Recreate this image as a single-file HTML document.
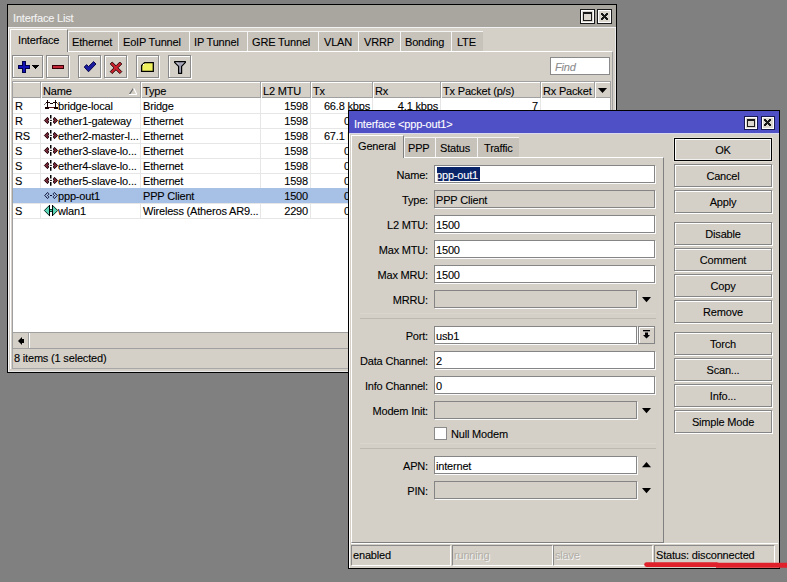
<!DOCTYPE html>
<html><head><meta charset="utf-8"><style>
html,body{margin:0;padding:0}
body{width:787px;height:582px;background:#808080;position:relative;overflow:hidden;font-family:"Liberation Sans",sans-serif}
body>div,body>span,body>svg{position:absolute;display:block}
.t{font:11px/12px "Liberation Sans",sans-serif;letter-spacing:-0.18px;white-space:nowrap;color:#000;-webkit-text-stroke:0.1px currentColor}
</style></head><body>
<div style="left:7px;top:4px;width:610px;height:369px;background:#d4d0c8;border:1px solid #000;box-sizing:border-box;box-shadow:inset 1px 1px 0 #f4f4f4, inset -1px -1px 0 #e8e8e8"></div>
<div style="left:8px;top:5px;width:608px;height:22px;background:#a9a69f"></div>
<div style="left:8px;top:27px;width:608px;height:1px;background:#f2f2f2"></div>
<span class="t" style="left:13px;top:11.7px;color:#f4f4f4">Interface List</span>
<div style="left:580px;top:9px;width:15px;height:15px;background:#dcd8d0;border:1px solid #1a1a1a;box-sizing:border-box;box-shadow:inset 1px 1px 0 #fff, inset -1px -1px 0 #fff"></div>
<div style="left:583px;top:12px;width:9px;height:9px;border:1px solid #1a1a1a;border-top-width:2px;box-sizing:border-box"></div>
<div style="left:597px;top:9px;width:15px;height:15px;background:#dcd8d0;border:1px solid #1a1a1a;box-sizing:border-box;box-shadow:inset 1px 1px 0 #fff, inset -1px -1px 0 #fff"></div>
<svg style="left:601px;top:13px" width="7" height="7" shape-rendering="crispEdges" fill="#1a1a1a"><rect x="0" y="0" width="1" height="1"/><rect x="1" y="0" width="1" height="1"/><rect x="5" y="0" width="1" height="1"/><rect x="6" y="0" width="1" height="1"/><rect x="0" y="1" width="1" height="1"/><rect x="1" y="1" width="1" height="1"/><rect x="2" y="1" width="1" height="1"/><rect x="4" y="1" width="1" height="1"/><rect x="5" y="1" width="1" height="1"/><rect x="6" y="1" width="1" height="1"/><rect x="1" y="2" width="1" height="1"/><rect x="2" y="2" width="1" height="1"/><rect x="3" y="2" width="1" height="1"/><rect x="4" y="2" width="1" height="1"/><rect x="5" y="2" width="1" height="1"/><rect x="2" y="3" width="1" height="1"/><rect x="3" y="3" width="1" height="1"/><rect x="4" y="3" width="1" height="1"/><rect x="1" y="4" width="1" height="1"/><rect x="2" y="4" width="1" height="1"/><rect x="3" y="4" width="1" height="1"/><rect x="4" y="4" width="1" height="1"/><rect x="5" y="4" width="1" height="1"/><rect x="0" y="5" width="1" height="1"/><rect x="1" y="5" width="1" height="1"/><rect x="2" y="5" width="1" height="1"/><rect x="4" y="5" width="1" height="1"/><rect x="5" y="5" width="1" height="1"/><rect x="6" y="5" width="1" height="1"/><rect x="0" y="6" width="1" height="1"/><rect x="1" y="6" width="1" height="1"/><rect x="5" y="6" width="1" height="1"/><rect x="6" y="6" width="1" height="1"/></svg>
<div style="left:10px;top:51px;width:603px;height:318px;border-top:1px solid #fff;border-left:1px solid #fff;border-right:1px solid #a0a0a0;box-sizing:border-box"></div>
<div style="left:10px;top:29px;width:58px;height:23px;background:#d4d0c8;border-left:1px solid #fff;border-top:1px solid #fff;border-right:1px solid #808080;box-sizing:border-box"></div>
<span class="t" style="left:18px;top:33.8px;">Interface</span>
<div style="left:68px;top:31px;width:50px;height:20px;background:#c7c3bb;border-left:1px solid #f4f4f4;border-top:1px solid #f4f4f4;box-sizing:border-box"></div>
<span class="t" style="left:72px;top:35.5px;">Ethernet</span>
<div style="left:118px;top:31px;width:71px;height:20px;background:#c7c3bb;border-left:1px solid #f4f4f4;border-top:1px solid #f4f4f4;box-sizing:border-box"></div>
<span class="t" style="left:123px;top:35.5px;">EoIP Tunnel</span>
<div style="left:189px;top:31px;width:58px;height:20px;background:#c7c3bb;border-left:1px solid #f4f4f4;border-top:1px solid #f4f4f4;box-sizing:border-box"></div>
<span class="t" style="left:194px;top:35.5px;">IP Tunnel</span>
<div style="left:247px;top:31px;width:71px;height:20px;background:#c7c3bb;border-left:1px solid #f4f4f4;border-top:1px solid #f4f4f4;box-sizing:border-box"></div>
<span class="t" style="left:252px;top:35.5px;">GRE Tunnel</span>
<div style="left:318px;top:31px;width:40px;height:20px;background:#c7c3bb;border-left:1px solid #f4f4f4;border-top:1px solid #f4f4f4;box-sizing:border-box"></div>
<span class="t" style="left:324px;top:35.5px;">VLAN</span>
<div style="left:358px;top:31px;width:42px;height:20px;background:#c7c3bb;border-left:1px solid #f4f4f4;border-top:1px solid #f4f4f4;box-sizing:border-box"></div>
<span class="t" style="left:364px;top:35.5px;">VRRP</span>
<div style="left:400px;top:31px;width:51px;height:20px;background:#c7c3bb;border-left:1px solid #f4f4f4;border-top:1px solid #f4f4f4;box-sizing:border-box"></div>
<span class="t" style="left:405px;top:35.5px;">Bonding</span>
<div style="left:451px;top:31px;width:32px;height:20px;background:#c7c3bb;border-left:1px solid #f4f4f4;border-top:1px solid #f4f4f4;box-sizing:border-box"></div>
<span class="t" style="left:457px;top:35.5px;">LTE</span>
<div style="left:12px;top:55px;width:31px;height:23px;border:1px solid #8a8a8a;box-sizing:border-box;box-shadow:inset 1px 1px 0 #fff, 1px 1px 0 #fff"></div>
<div style="left:46px;top:55px;width:23px;height:23px;border:1px solid #8a8a8a;box-sizing:border-box;box-shadow:inset 1px 1px 0 #fff, 1px 1px 0 #fff"></div>
<div style="left:78px;top:55px;width:23px;height:23px;border:1px solid #8a8a8a;box-sizing:border-box;box-shadow:inset 1px 1px 0 #fff, 1px 1px 0 #fff"></div>
<div style="left:104px;top:55px;width:23px;height:23px;border:1px solid #8a8a8a;box-sizing:border-box;box-shadow:inset 1px 1px 0 #fff, 1px 1px 0 #fff"></div>
<div style="left:136px;top:55px;width:23px;height:23px;border:1px solid #8a8a8a;box-sizing:border-box;box-shadow:inset 1px 1px 0 #fff, 1px 1px 0 #fff"></div>
<div style="left:168px;top:55px;width:23px;height:23px;border:1px solid #8a8a8a;box-sizing:border-box;box-shadow:inset 1px 1px 0 #fff, 1px 1px 0 #fff"></div>
<svg style="left:0px;top:0px" width="200" height="80" viewBox="0 0 200 80" shape-rendering="crispEdges"><path d="M22 61h4v4h4v4h-4v4h-4v-4h-4v-4h4z" fill="#00004a"/><path d="M23 62h2v4h4v2h-4v4h-2v-4h-4v-2h4z" fill="#1212b4"/><path d="M32 65h7v1h-1v1h-1v1h-1v1h-1v-1h-1v-1h-1v-1h-1z" fill="#000"/><rect x="52" y="65" width="12" height="4" fill="#3a0008"/><rect x="53" y="66" width="10" height="2" fill="#c02838"/></svg>
<svg style="left:80px;top:58px" width="20" height="18" viewBox="0 0 20 18"><path d="M4.2 9L6.6 6.6L8.5 8.6L13.6 3.6L16 6L8.5 13.8Z" fill="#1a1aa0" stroke="#000040" stroke-width="0.9" stroke-linejoin="round"/></svg>
<svg style="left:106px;top:58px" width="20" height="18" viewBox="0 0 20 18"><path d="M4.2 6L6.2 4L10 7.8L13.8 4L15.8 6L12 9.8L15.8 13.6L13.8 15.6L10 11.8L6.2 15.6L4.2 13.6L8 9.8Z" fill="#c8202c" stroke="#200000" stroke-width="0.9" stroke-linejoin="round"/></svg>
<svg style="left:136px;top:56px" width="24" height="22" viewBox="0 0 24 22"><path d="M8.6 6.6H17.3V15.3H5.6V9.6Z" fill="#eef060" stroke="#000" stroke-width="1.3"/><rect x="7" y="8" width="1.2" height="1.2" fill="#fff"/></svg>
<svg style="left:168px;top:56px" width="24" height="22" viewBox="0 0 24 22"><defs><linearGradient id="fg" x1="0" x2="1"><stop offset="0" stop-color="#e8e8f4"/><stop offset="0.5" stop-color="#9c9cb0"/><stop offset="1" stop-color="#c8c8d8"/></linearGradient></defs><path d="M6.6 5.6H17.4V6.4L13.6 10.4V17.4H10.6V10.4L6.6 6.4Z" fill="url(#fg)" stroke="#000" stroke-width="1.2" stroke-linejoin="round"/></svg>
<div style="left:550px;top:57px;width:60px;height:18px;background:#fff;border:1px solid #8a8a8a;box-sizing:border-box"></div>
<span class="t" style="left:555px;top:60.5px;color:#8c8c8c;font-style:italic">Find</span>
<div style="left:12px;top:81px;width:599px;height:251px;background:#fff;border:1px solid #a0a0a0;border-bottom:none;box-sizing:border-box"></div>
<div style="left:13px;top:82px;width:597px;height:16px;background:#d4d0c8;border-bottom:1px solid #a0a0a0;box-sizing:border-box;box-shadow:inset 0 1px 0 #fff"></div>
<div style="left:40px;top:82px;width:1px;height:16px;background:#a0a0a0"></div>
<div style="left:41px;top:82px;width:1px;height:16px;background:#fff"></div>
<div style="left:40px;top:98px;width:1px;height:120px;background:#e6e6e6"></div>
<div style="left:140px;top:82px;width:1px;height:16px;background:#a0a0a0"></div>
<div style="left:141px;top:82px;width:1px;height:16px;background:#fff"></div>
<div style="left:140px;top:98px;width:1px;height:120px;background:#e6e6e6"></div>
<div style="left:260px;top:82px;width:1px;height:16px;background:#a0a0a0"></div>
<div style="left:261px;top:82px;width:1px;height:16px;background:#fff"></div>
<div style="left:260px;top:98px;width:1px;height:120px;background:#e6e6e6"></div>
<div style="left:310px;top:82px;width:1px;height:16px;background:#a0a0a0"></div>
<div style="left:311px;top:82px;width:1px;height:16px;background:#fff"></div>
<div style="left:310px;top:98px;width:1px;height:120px;background:#e6e6e6"></div>
<div style="left:372px;top:82px;width:1px;height:16px;background:#a0a0a0"></div>
<div style="left:373px;top:82px;width:1px;height:16px;background:#fff"></div>
<div style="left:372px;top:98px;width:1px;height:120px;background:#e6e6e6"></div>
<div style="left:440px;top:82px;width:1px;height:16px;background:#a0a0a0"></div>
<div style="left:441px;top:82px;width:1px;height:16px;background:#fff"></div>
<div style="left:440px;top:98px;width:1px;height:120px;background:#e6e6e6"></div>
<div style="left:540px;top:82px;width:1px;height:16px;background:#a0a0a0"></div>
<div style="left:541px;top:82px;width:1px;height:16px;background:#fff"></div>
<div style="left:540px;top:98px;width:1px;height:120px;background:#e6e6e6"></div>
<div style="left:594px;top:82px;width:1px;height:16px;background:#a0a0a0"></div>
<div style="left:595px;top:82px;width:1px;height:16px;background:#fff"></div>
<span class="t" style="left:43px;top:84.5px;">Name</span>
<span class="t" style="left:143px;top:84.5px;">Type</span>
<span class="t" style="left:263px;top:84.5px;">L2 MTU</span>
<span class="t" style="left:313px;top:84.5px;">Tx</span>
<span class="t" style="left:375px;top:84.5px;">Rx</span>
<span class="t" style="left:443px;top:84.5px;">Tx Packet (p/s)</span>
<span class="t" style="left:543px;top:84.5px;">Rx Packet</span>
<svg style="left:126px;top:85px" width="14" height="12" viewBox="0 0 14 12"><path d="M3.5 9.2L7.6 3" stroke="#6a6a6a" stroke-width="1.2"/><path d="M7.6 3L10.8 9.2M3 9.5H11" stroke="#ffffff" stroke-width="1.2"/></svg>
<svg style="left:598px;top:88px" width="9" height="5" viewBox="0 0 9 5"><path d="M0 0H9L4.5 5Z" fill="#000"/></svg>
<div style="left:13px;top:113px;width:597px;height:1px;background:#e6e6e6"></div>
<span class="t" style="left:15px;top:99.5px;">R</span>
<span class="t" style="left:58px;top:99.5px;">bridge-local</span>
<span class="t" style="left:143px;top:99.5px;">Bridge</span>
<span class="t" style="right:479px;top:99.5px;">1598</span>
<span class="t" style="right:417px;top:99.5px;">66.8 kbps</span>
<span class="t" style="right:349px;top:99.5px;">4.1 kbps</span>
<span class="t" style="right:249px;top:99.5px;">7</span>
<svg style="left:42px;top:98px" width="18" height="15" shape-rendering="crispEdges"><rect x="5" y="2" width="1" height="1" fill="#140000" opacity="1"/><rect x="13" y="2" width="1" height="1" fill="#140000" opacity="1"/><rect x="5" y="3" width="1" height="1" fill="#140000" opacity="1"/><rect x="13" y="3" width="1" height="1" fill="#140000" opacity="1"/><rect x="4" y="4" width="1" height="1" fill="#140000" opacity="1"/><rect x="5" y="4" width="1" height="1" fill="#140000" opacity="1"/><rect x="6" y="4" width="1" height="1" fill="#140000" opacity="1"/><rect x="7" y="4" width="1" height="1" fill="#140000" opacity="1"/><rect x="11" y="4" width="1" height="1" fill="#140000" opacity="1"/><rect x="12" y="4" width="1" height="1" fill="#140000" opacity="1"/><rect x="13" y="4" width="1" height="1" fill="#140000" opacity="1"/><rect x="14" y="4" width="1" height="1" fill="#140000" opacity="1"/><rect x="3" y="5" width="1" height="1" fill="#140000" opacity="0.55"/><rect x="5" y="5" width="1" height="1" fill="#140000" opacity="1"/><rect x="8" y="5" width="1" height="1" fill="#140000" opacity="1"/><rect x="9" y="5" width="1" height="1" fill="#140000" opacity="1"/><rect x="10" y="5" width="1" height="1" fill="#140000" opacity="1"/><rect x="13" y="5" width="1" height="1" fill="#140000" opacity="1"/><rect x="15" y="5" width="1" height="1" fill="#140000" opacity="0.55"/><rect x="2" y="6" width="1" height="1" fill="#140000" opacity="0.55"/><rect x="5" y="6" width="1" height="1" fill="#140000" opacity="1"/><rect x="13" y="6" width="1" height="1" fill="#140000" opacity="1"/><rect x="16" y="6" width="1" height="1" fill="#140000" opacity="0.55"/><rect x="5" y="7" width="1" height="1" fill="#140000" opacity="1"/><rect x="13" y="7" width="1" height="1" fill="#140000" opacity="1"/><rect x="5" y="8" width="1" height="1" fill="#140000" opacity="1"/><rect x="13" y="8" width="1" height="1" fill="#140000" opacity="1"/><rect x="3" y="9" width="1" height="1" fill="#140000" opacity="1"/><rect x="4" y="9" width="1" height="1" fill="#140000" opacity="1"/><rect x="5" y="9" width="1" height="1" fill="#140000" opacity="1"/><rect x="6" y="9" width="1" height="1" fill="#140000" opacity="1"/><rect x="7" y="9" width="1" height="1" fill="#5a1414" opacity="1"/><rect x="8" y="9" width="1" height="1" fill="#5a1414" opacity="1"/><rect x="9" y="9" width="1" height="1" fill="#5a1414" opacity="1"/><rect x="10" y="9" width="1" height="1" fill="#5a1414" opacity="1"/><rect x="11" y="9" width="1" height="1" fill="#5a1414" opacity="1"/><rect x="12" y="9" width="1" height="1" fill="#140000" opacity="1"/><rect x="13" y="9" width="1" height="1" fill="#140000" opacity="1"/><rect x="14" y="9" width="1" height="1" fill="#140000" opacity="1"/><rect x="15" y="9" width="1" height="1" fill="#140000" opacity="1"/><rect x="3" y="10" width="1" height="1" fill="#140000" opacity="1"/><rect x="4" y="10" width="1" height="1" fill="#140000" opacity="1"/><rect x="5" y="10" width="1" height="1" fill="#140000" opacity="1"/><rect x="6" y="10" width="1" height="1" fill="#140000" opacity="1"/><rect x="12" y="10" width="1" height="1" fill="#140000" opacity="1"/><rect x="13" y="10" width="1" height="1" fill="#140000" opacity="1"/><rect x="14" y="10" width="1" height="1" fill="#140000" opacity="1"/><rect x="15" y="10" width="1" height="1" fill="#140000" opacity="1"/></svg>
<div style="left:13px;top:128px;width:597px;height:1px;background:#e6e6e6"></div>
<span class="t" style="left:15px;top:114.5px;">R</span>
<span class="t" style="left:58px;top:114.5px;">ether1-gateway</span>
<span class="t" style="left:143px;top:114.5px;">Ethernet</span>
<span class="t" style="right:479px;top:114.5px;">1598</span>
<span class="t" style="right:417px;top:114.5px;">0 bps</span>
<svg style="left:42px;top:113px" width="18" height="15" viewBox="0 0 18 15"><path d="M2.4 7.5L5.5 4.3L6.6 6L6 7.5L6.6 9L5.5 10.7Z" fill="#7a2a3a" stroke="#1a0004" stroke-width="1" stroke-linejoin="round"/><path d="M15.6 7.5L12.5 4.3L11.4 6L12 7.5L11.4 9L12.5 10.7Z" fill="#7a2a3a" stroke="#1a0004" stroke-width="1" stroke-linejoin="round"/><path d="M8.75 2.1V5.6M8.75 9V12.8" stroke="#000" stroke-width="1.5"/><path d="M7.9 7.4H9.9" stroke="#000" stroke-width="1"/></svg>
<div style="left:13px;top:143px;width:597px;height:1px;background:#e6e6e6"></div>
<span class="t" style="left:15px;top:129.5px;">RS</span>
<span class="t" style="left:58px;top:129.5px;">ether2-master-l...</span>
<span class="t" style="left:143px;top:129.5px;">Ethernet</span>
<span class="t" style="right:479px;top:129.5px;">1598</span>
<span class="t" style="right:417px;top:129.5px;">67.1 kbps</span>
<svg style="left:42px;top:128px" width="18" height="15" viewBox="0 0 18 15"><path d="M2.4 7.5L5.5 4.3L6.6 6L6 7.5L6.6 9L5.5 10.7Z" fill="#7a2a3a" stroke="#1a0004" stroke-width="1" stroke-linejoin="round"/><path d="M15.6 7.5L12.5 4.3L11.4 6L12 7.5L11.4 9L12.5 10.7Z" fill="#7a2a3a" stroke="#1a0004" stroke-width="1" stroke-linejoin="round"/><path d="M8.75 2.1V5.6M8.75 9V12.8" stroke="#000" stroke-width="1.5"/><path d="M7.9 7.4H9.9" stroke="#000" stroke-width="1"/></svg>
<div style="left:13px;top:158px;width:597px;height:1px;background:#e6e6e6"></div>
<span class="t" style="left:15px;top:144.5px;">S</span>
<span class="t" style="left:58px;top:144.5px;">ether3-slave-lo...</span>
<span class="t" style="left:143px;top:144.5px;">Ethernet</span>
<span class="t" style="right:479px;top:144.5px;">1598</span>
<span class="t" style="right:417px;top:144.5px;">0 bps</span>
<svg style="left:42px;top:143px" width="18" height="15" viewBox="0 0 18 15"><path d="M2.4 7.5L5.5 4.3L6.6 6L6 7.5L6.6 9L5.5 10.7Z" fill="#7a2a3a" stroke="#1a0004" stroke-width="1" stroke-linejoin="round"/><path d="M15.6 7.5L12.5 4.3L11.4 6L12 7.5L11.4 9L12.5 10.7Z" fill="#7a2a3a" stroke="#1a0004" stroke-width="1" stroke-linejoin="round"/><path d="M8.75 2.1V5.6M8.75 9V12.8" stroke="#000" stroke-width="1.5"/><path d="M7.9 7.4H9.9" stroke="#000" stroke-width="1"/></svg>
<div style="left:13px;top:173px;width:597px;height:1px;background:#e6e6e6"></div>
<span class="t" style="left:15px;top:159.5px;">S</span>
<span class="t" style="left:58px;top:159.5px;">ether4-slave-lo...</span>
<span class="t" style="left:143px;top:159.5px;">Ethernet</span>
<span class="t" style="right:479px;top:159.5px;">1598</span>
<span class="t" style="right:417px;top:159.5px;">0 bps</span>
<svg style="left:42px;top:158px" width="18" height="15" viewBox="0 0 18 15"><path d="M2.4 7.5L5.5 4.3L6.6 6L6 7.5L6.6 9L5.5 10.7Z" fill="#7a2a3a" stroke="#1a0004" stroke-width="1" stroke-linejoin="round"/><path d="M15.6 7.5L12.5 4.3L11.4 6L12 7.5L11.4 9L12.5 10.7Z" fill="#7a2a3a" stroke="#1a0004" stroke-width="1" stroke-linejoin="round"/><path d="M8.75 2.1V5.6M8.75 9V12.8" stroke="#000" stroke-width="1.5"/><path d="M7.9 7.4H9.9" stroke="#000" stroke-width="1"/></svg>
<div style="left:13px;top:188px;width:597px;height:1px;background:#e6e6e6"></div>
<span class="t" style="left:15px;top:174.5px;">S</span>
<span class="t" style="left:58px;top:174.5px;">ether5-slave-lo...</span>
<span class="t" style="left:143px;top:174.5px;">Ethernet</span>
<span class="t" style="right:479px;top:174.5px;">1598</span>
<span class="t" style="right:417px;top:174.5px;">0 bps</span>
<svg style="left:42px;top:173px" width="18" height="15" viewBox="0 0 18 15"><path d="M2.4 7.5L5.5 4.3L6.6 6L6 7.5L6.6 9L5.5 10.7Z" fill="#7a2a3a" stroke="#1a0004" stroke-width="1" stroke-linejoin="round"/><path d="M15.6 7.5L12.5 4.3L11.4 6L12 7.5L11.4 9L12.5 10.7Z" fill="#7a2a3a" stroke="#1a0004" stroke-width="1" stroke-linejoin="round"/><path d="M8.75 2.1V5.6M8.75 9V12.8" stroke="#000" stroke-width="1.5"/><path d="M7.9 7.4H9.9" stroke="#000" stroke-width="1"/></svg>
<div style="left:13px;top:188px;width:597px;height:15px;background:#a7c0e6"></div>
<div style="left:13px;top:203px;width:597px;height:1px;background:#e6e6e6"></div>
<span class="t" style="left:58px;top:189.5px;">ppp-out1</span>
<span class="t" style="left:143px;top:189.5px;">PPP Client</span>
<span class="t" style="right:479px;top:189.5px;">1500</span>
<span class="t" style="right:417px;top:189.5px;">0 bps</span>
<svg style="left:42px;top:188px" width="18" height="15" viewBox="0 0 18 15"><path d="M2.8 7.5L5.6 4.5L6.6 5.5V6.5L5.6 7.5L6.6 8.5V9.5L5.6 10.5Z" fill="none" stroke="#050a30" stroke-width="1" stroke-linejoin="round"/><path d="M15.2 7.5L12.4 4.5L11.4 5.5V6.5L12.4 7.5L11.4 8.5V9.5L12.4 10.5Z" fill="none" stroke="#050a30" stroke-width="1" stroke-linejoin="round"/><path d="M8 7.5H10" stroke="#050a30" stroke-width="1.2"/></svg>
<div style="left:13px;top:218px;width:597px;height:1px;background:#e6e6e6"></div>
<span class="t" style="left:15px;top:204.5px;">S</span>
<span class="t" style="left:58px;top:204.5px;">wlan1</span>
<span class="t" style="left:143px;top:204.5px;">Wireless (Atheros AR9...</span>
<span class="t" style="right:479px;top:204.5px;">2290</span>
<span class="t" style="right:417px;top:204.5px;">0 bps</span>
<svg style="left:42px;top:203px" width="18" height="15" viewBox="0 0 18 15"><path d="M2.3 7.5L7.5 2.3V12.7Z" fill="#5ad8b8" stroke="#062a20" stroke-width="1" stroke-linejoin="round"/><path d="M15.7 7.5L10.5 2.3V12.7Z" fill="#5ad8b8" stroke="#062a20" stroke-width="1" stroke-linejoin="round"/><rect x="8" y="6" width="2" height="3" fill="#50c8a8"/><path d="M7.5 2V13M10.5 2V13" stroke="#000" stroke-width="1"/><path d="M8 6.5H10M8 8.5H10" stroke="#073a2c" stroke-width="1"/></svg>
<div style="left:12px;top:332px;width:599px;height:17px;background:#d4d0c8;border-top:1px solid #a0a0a0;border-bottom:1px solid #a0a0a0;border-left:1px solid #a0a0a0;box-sizing:border-box"></div>
<div style="left:28px;top:333px;width:1px;height:15px;background:#a0a0a0"></div>
<svg style="left:17px;top:336px" width="9" height="10" viewBox="0 0 9 10"><path d="M1 5L5 1V9Z" fill="#000"/><rect x="4.5" y="3" width="2.5" height="4" fill="#000"/></svg>
<div style="left:29px;top:333px;width:1px;height:15px;background:#fff"></div>
<div style="left:12px;top:349px;width:599px;height:20px;border-bottom:1px solid #a8a8a8;border-left:1px solid #a8a8a8;box-sizing:border-box"></div>
<span class="t" style="left:14px;top:351.5px;">8 items (1 selected)</span>
<div style="left:348px;top:110px;width:432px;height:459px;background:#d4d0c8;border:1px solid #000;box-sizing:border-box;box-shadow:inset 1px 1px 0 #fff"></div>
<div style="left:349px;top:111px;width:430px;height:22px;background:#4f50c6"></div>
<div style="left:349px;top:133px;width:430px;height:1px;background:#d8d8f0"></div>
<span class="t" style="left:354px;top:117.7px;color:#fff">Interface &lt;ppp-out1&gt;</span>
<div style="left:744px;top:116px;width:14px;height:14px;background:#dcd8d0;border:1px solid #181850;box-sizing:border-box;box-shadow:inset 1px 1px 0 #fff, inset -1px -1px 0 #fff"></div>
<div style="left:747px;top:119px;width:8px;height:8px;border:1px solid #1a1a1a;border-top-width:2px;box-sizing:border-box"></div>
<div style="left:761px;top:116px;width:14px;height:14px;background:#dcd8d0;border:1px solid #181850;box-sizing:border-box;box-shadow:inset 1px 1px 0 #fff, inset -1px -1px 0 #fff"></div>
<svg style="left:764px;top:119px" width="7" height="7" shape-rendering="crispEdges" fill="#1a1a1a"><rect x="0" y="0" width="1" height="1"/><rect x="1" y="0" width="1" height="1"/><rect x="5" y="0" width="1" height="1"/><rect x="6" y="0" width="1" height="1"/><rect x="0" y="1" width="1" height="1"/><rect x="1" y="1" width="1" height="1"/><rect x="2" y="1" width="1" height="1"/><rect x="4" y="1" width="1" height="1"/><rect x="5" y="1" width="1" height="1"/><rect x="6" y="1" width="1" height="1"/><rect x="1" y="2" width="1" height="1"/><rect x="2" y="2" width="1" height="1"/><rect x="3" y="2" width="1" height="1"/><rect x="4" y="2" width="1" height="1"/><rect x="5" y="2" width="1" height="1"/><rect x="2" y="3" width="1" height="1"/><rect x="3" y="3" width="1" height="1"/><rect x="4" y="3" width="1" height="1"/><rect x="1" y="4" width="1" height="1"/><rect x="2" y="4" width="1" height="1"/><rect x="3" y="4" width="1" height="1"/><rect x="4" y="4" width="1" height="1"/><rect x="5" y="4" width="1" height="1"/><rect x="0" y="5" width="1" height="1"/><rect x="1" y="5" width="1" height="1"/><rect x="2" y="5" width="1" height="1"/><rect x="4" y="5" width="1" height="1"/><rect x="5" y="5" width="1" height="1"/><rect x="6" y="5" width="1" height="1"/><rect x="0" y="6" width="1" height="1"/><rect x="1" y="6" width="1" height="1"/><rect x="5" y="6" width="1" height="1"/><rect x="6" y="6" width="1" height="1"/></svg>
<div style="left:351px;top:157px;width:313px;height:386px;border-top:1px solid #fff;border-left:1px solid #fff;border-right:1px solid #808080;border-bottom:1px solid #808080;box-sizing:border-box"></div>
<div style="left:351px;top:135px;width:53px;height:23px;background:#d4d0c8;border-left:1px solid #fff;border-top:1px solid #fff;border-right:1px solid #808080;box-sizing:border-box"></div>
<span class="t" style="left:358px;top:139.5px;">General</span>
<div style="left:404px;top:137px;width:31px;height:20px;background:#c7c3bb;border-left:1px solid #f4f4f4;border-top:1px solid #f4f4f4;box-sizing:border-box"></div>
<span class="t" style="left:408px;top:141.5px;">PPP</span>
<div style="left:435px;top:137px;width:42px;height:20px;background:#c7c3bb;border-left:1px solid #f4f4f4;border-top:1px solid #f4f4f4;box-sizing:border-box"></div>
<span class="t" style="left:440px;top:141.5px;">Status</span>
<div style="left:477px;top:137px;width:42px;height:20px;background:#c7c3bb;border-left:1px solid #f4f4f4;border-top:1px solid #f4f4f4;box-sizing:border-box"></div>
<span class="t" style="left:484px;top:141.5px;">Traffic</span>
<div style="left:434px;top:165px;width:221px;height:18px;background:#fff;border:1px solid #858585;box-sizing:border-box;box-shadow:1px 1px 0 #fbfbfb"></div>
<span class="t" style="right:359px;top:169px;">Name:</span>
<div style="left:437px;top:167px;width:43px;height:14px;background:#0a246a"></div>
<span class="t" style="left:436px;top:168.5px;color:#fff">ppp-out1</span>
<div style="left:434px;top:190px;width:221px;height:18px;background:#d4d0c8;border:1px solid #858585;box-sizing:border-box;box-shadow:1px 1px 0 #fbfbfb"></div>
<span class="t" style="right:359px;top:194px;">Type:</span>
<span class="t" style="left:436px;top:193.5px;">PPP Client</span>
<div style="left:434px;top:215px;width:221px;height:18px;background:#fff;border:1px solid #858585;box-sizing:border-box;box-shadow:1px 1px 0 #fbfbfb"></div>
<span class="t" style="right:359px;top:219px;">L2 MTU:</span>
<span class="t" style="left:436px;top:218.5px;">1500</span>
<div style="left:434px;top:240px;width:221px;height:18px;background:#fff;border:1px solid #858585;box-sizing:border-box;box-shadow:1px 1px 0 #fbfbfb"></div>
<span class="t" style="right:359px;top:244px;">Max MTU:</span>
<span class="t" style="left:436px;top:243.5px;">1500</span>
<div style="left:434px;top:265px;width:221px;height:18px;background:#fff;border:1px solid #858585;box-sizing:border-box;box-shadow:1px 1px 0 #fbfbfb"></div>
<span class="t" style="right:359px;top:269px;">Max MRU:</span>
<span class="t" style="left:436px;top:268.5px;">1500</span>
<div style="left:434px;top:290px;width:203px;height:18px;background:#d4d0c8;border:1px solid #858585;box-sizing:border-box;box-shadow:1px 1px 0 #fbfbfb"></div>
<span class="t" style="right:359px;top:294px;">MRRU:</span>
<svg style="left:642px;top:297px" width="10" height="6" viewBox="0 0 10 6"><path d="M0 0H9L4.5 5.2Z" fill="#000"/></svg>
<div style="left:360px;top:313px;width:296px;height:1px;background:#dad6cc"></div>
<div style="left:360px;top:318px;width:296px;height:1px;background:#bdb9b1"></div>
<div style="left:434px;top:326px;width:203px;height:18px;background:#fff;border:1px solid #858585;box-sizing:border-box;box-shadow:1px 1px 0 #fbfbfb"></div>
<span class="t" style="right:359px;top:330px;">Port:</span>
<span class="t" style="left:436px;top:329.5px;">usb1</span>
<div style="left:638px;top:326px;width:17px;height:18px;border:1px solid #858585;box-sizing:border-box;box-shadow:inset 1px 1px 0 #fff"></div>
<svg style="left:642px;top:330px" width="9" height="9" viewBox="0 0 9 9"><rect x="1" y="0" width="7" height="1.3" fill="#000"/><path d="M3 2.5H6V5H8L4.5 8.5L1 5H3Z" fill="#000"/></svg>
<div style="left:434px;top:351px;width:221px;height:18px;background:#fff;border:1px solid #858585;box-sizing:border-box;box-shadow:1px 1px 0 #fbfbfb"></div>
<span class="t" style="right:359px;top:355px;">Data Channel:</span>
<span class="t" style="left:436px;top:354.5px;">2</span>
<div style="left:434px;top:376px;width:221px;height:18px;background:#fff;border:1px solid #858585;box-sizing:border-box;box-shadow:1px 1px 0 #fbfbfb"></div>
<span class="t" style="right:359px;top:380px;">Info Channel:</span>
<span class="t" style="left:436px;top:379.5px;">0</span>
<div style="left:434px;top:401px;width:203px;height:18px;background:#d4d0c8;border:1px solid #858585;box-sizing:border-box;box-shadow:1px 1px 0 #fbfbfb"></div>
<span class="t" style="right:359px;top:405px;">Modem Init:</span>
<svg style="left:642px;top:408px" width="10" height="6" viewBox="0 0 10 6"><path d="M0 0H9L4.5 5.2Z" fill="#000"/></svg>
<div style="left:434px;top:427px;width:13px;height:13px;background:#fff;border:1px solid #8a8a8a;box-sizing:border-box"></div>
<span class="t" style="left:451px;top:428px;">Null Modem</span>
<div style="left:360px;top:443px;width:296px;height:1px;background:#dad6cc"></div>
<div style="left:360px;top:448px;width:296px;height:1px;background:#bdb9b1"></div>
<div style="left:434px;top:456px;width:203px;height:18px;background:#fff;border:1px solid #858585;box-sizing:border-box;box-shadow:1px 1px 0 #fbfbfb"></div>
<span class="t" style="right:359px;top:460px;">APN:</span>
<span class="t" style="left:436px;top:459.5px;">internet</span>
<svg style="left:642px;top:462px" width="10" height="6" viewBox="0 0 10 6"><path d="M0 5.2H9L4.5 0Z" fill="#000"/></svg>
<div style="left:434px;top:481px;width:203px;height:18px;background:#d4d0c8;border:1px solid #858585;box-sizing:border-box;box-shadow:1px 1px 0 #fbfbfb"></div>
<span class="t" style="right:359px;top:485px;">PIN:</span>
<svg style="left:642px;top:488px" width="10" height="6" viewBox="0 0 10 6"><path d="M0 0H9L4.5 5.2Z" fill="#000"/></svg>
<div style="left:674px;top:138px;width:98px;height:23px;border:1px solid #000;box-sizing:border-box;box-shadow:inset 1px 1px 0 #fff, inset -1px -1px 0 #f0f0f0, 0 0 0 1px #e4e0d8"></div>
<span class="t" style="left:523px;width:400px;text-align:center;top:143.5px;">OK</span>
<div style="left:674px;top:164px;width:98px;height:23px;border:1px solid #858585;box-sizing:border-box;box-shadow:inset 1px 1px 0 #fff, 1px 1px 0 #fff"></div>
<span class="t" style="left:523px;width:400px;text-align:center;top:169.5px;">Cancel</span>
<div style="left:674px;top:190px;width:98px;height:23px;border:1px solid #858585;box-sizing:border-box;box-shadow:inset 1px 1px 0 #fff, 1px 1px 0 #fff"></div>
<span class="t" style="left:523px;width:400px;text-align:center;top:195.5px;">Apply</span>
<div style="left:674px;top:222px;width:98px;height:23px;border:1px solid #858585;box-sizing:border-box;box-shadow:inset 1px 1px 0 #fff, 1px 1px 0 #fff"></div>
<span class="t" style="left:523px;width:400px;text-align:center;top:227.5px;">Disable</span>
<div style="left:674px;top:248px;width:98px;height:23px;border:1px solid #858585;box-sizing:border-box;box-shadow:inset 1px 1px 0 #fff, 1px 1px 0 #fff"></div>
<span class="t" style="left:523px;width:400px;text-align:center;top:253.5px;">Comment</span>
<div style="left:674px;top:274px;width:98px;height:23px;border:1px solid #858585;box-sizing:border-box;box-shadow:inset 1px 1px 0 #fff, 1px 1px 0 #fff"></div>
<span class="t" style="left:523px;width:400px;text-align:center;top:279.5px;">Copy</span>
<div style="left:674px;top:300px;width:98px;height:23px;border:1px solid #858585;box-sizing:border-box;box-shadow:inset 1px 1px 0 #fff, 1px 1px 0 #fff"></div>
<span class="t" style="left:523px;width:400px;text-align:center;top:305.5px;">Remove</span>
<div style="left:674px;top:332px;width:98px;height:23px;border:1px solid #858585;box-sizing:border-box;box-shadow:inset 1px 1px 0 #fff, 1px 1px 0 #fff"></div>
<span class="t" style="left:523px;width:400px;text-align:center;top:337.5px;">Torch</span>
<div style="left:674px;top:358px;width:98px;height:23px;border:1px solid #858585;box-sizing:border-box;box-shadow:inset 1px 1px 0 #fff, 1px 1px 0 #fff"></div>
<span class="t" style="left:523px;width:400px;text-align:center;top:363.5px;">Scan...</span>
<div style="left:674px;top:384px;width:98px;height:23px;border:1px solid #858585;box-sizing:border-box;box-shadow:inset 1px 1px 0 #fff, 1px 1px 0 #fff"></div>
<span class="t" style="left:523px;width:400px;text-align:center;top:389.5px;">Info...</span>
<div style="left:674px;top:410px;width:98px;height:23px;border:1px solid #858585;box-sizing:border-box;box-shadow:inset 1px 1px 0 #fff, 1px 1px 0 #fff"></div>
<span class="t" style="left:523px;width:400px;text-align:center;top:415.5px;">Simple Mode</span>
<div style="left:351px;top:543px;width:427px;height:1px;background:#fff"></div>
<div style="left:351px;top:545px;width:99px;height:20px;border-top:1px solid #8a8a8a;border-left:1px solid #8a8a8a;box-sizing:border-box;box-shadow:1px 1px 0 #fff"></div>
<span class="t" style="left:353px;top:548.6px;">enabled</span>
<div style="left:452px;top:545px;width:100px;height:20px;border-top:1px solid #8a8a8a;border-left:1px solid #8a8a8a;box-sizing:border-box;box-shadow:1px 1px 0 #fff"></div>
<span class="t" style="left:454px;top:548.6px;color:#b4b0a8;text-shadow:1px 1px 0 #f4f4f4">running</span>
<div style="left:553px;top:545px;width:99px;height:20px;border-top:1px solid #8a8a8a;border-left:1px solid #8a8a8a;box-sizing:border-box;box-shadow:1px 1px 0 #fff"></div>
<span class="t" style="left:555px;top:548.6px;color:#b4b0a8;text-shadow:1px 1px 0 #f4f4f4">slave</span>
<div style="left:654px;top:545px;width:120px;height:20px;border-top:1px solid #8a8a8a;border-left:1px solid #8a8a8a;box-sizing:border-box;box-shadow:1px 1px 0 #fff"></div>
<span class="t" style="left:656px;top:548.6px;">Status: disconnected</span>
<svg style="left:640px;top:558px" width="147" height="14" viewBox="0 0 147 14"><path d="M6.5 6.6H76.5" stroke="#e0202a" stroke-width="4.6" stroke-linecap="round"/><path d="M76 7.2H147" stroke="#e0202a" stroke-width="5"/></svg>
</body></html>
